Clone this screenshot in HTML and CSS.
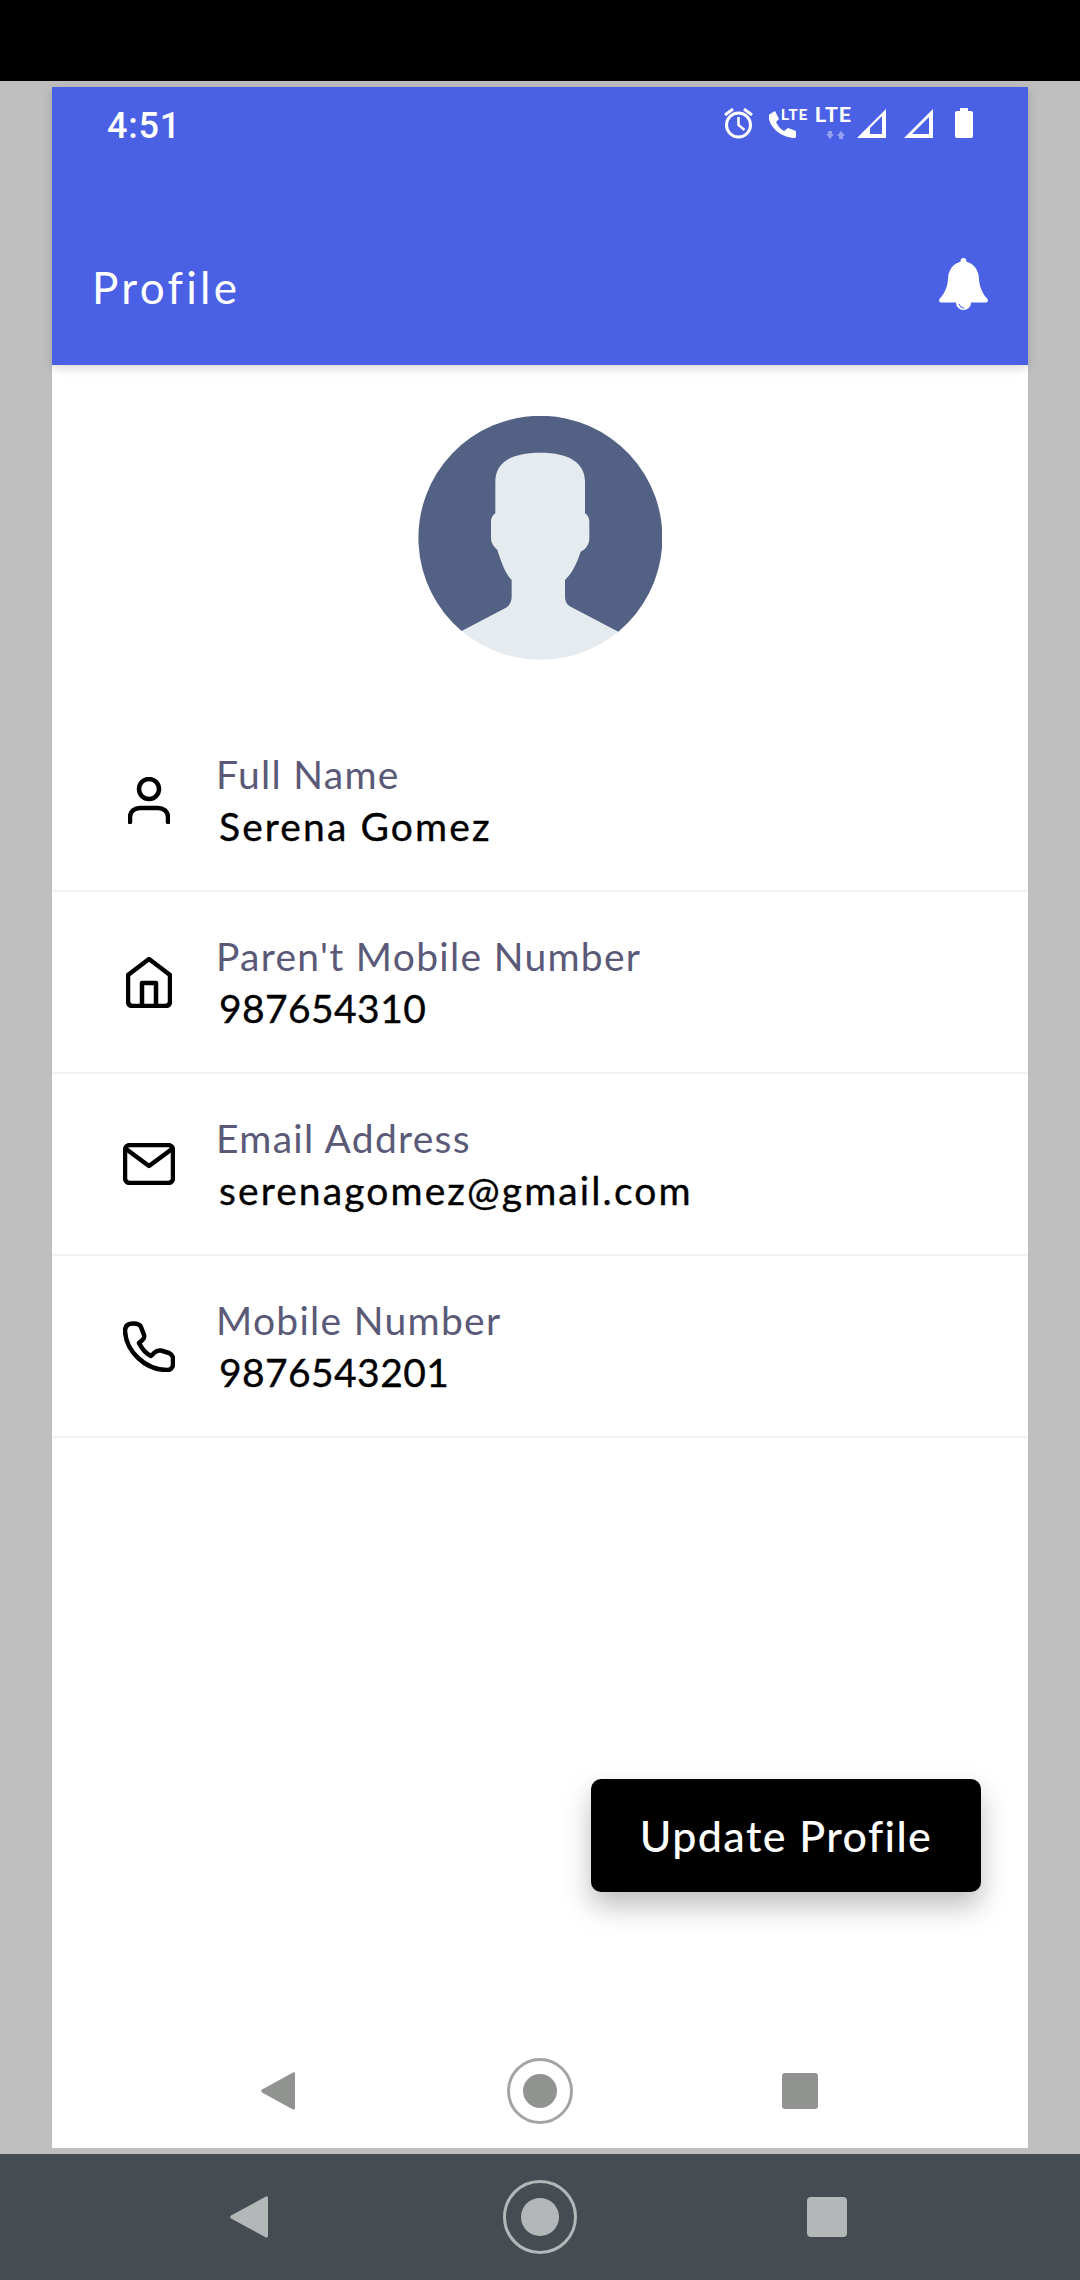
FILE: index.html
```html
<!DOCTYPE html>
<html lang="en">
<head>
<meta charset="utf-8">
<title>Profile</title>
<link rel="stylesheet" href="styles.css">
</head>
<body>
<div class="device">
  <div class="topbar"></div>
  <div class="stage">
    <div class="screen">
      <header class="appbar">
        <div class="status">
          <span class="time">4:51</span>
          <div class="status-icons">
            <svg class="si-alarm" viewBox="724 108 29 31" width="29" height="31">
              <circle cx="738.5" cy="125" r="12" fill="none" stroke="#fff" stroke-width="3"/>
              <path d="M738.5 117v8l6 5" fill="none" stroke="#fff" stroke-width="2.500"/>
              <path d="M725 115l8-6M752 115l-8-6" fill="none" stroke="#fff" stroke-width="3"/>
            </svg>
            <div class="si-call">
              <svg viewBox="769 108 28 31" width="28" height="31" fill="#fff">
                <path d="M775 111l-5 3c-1.500 1-1.500 3-1 5 2 10 14 19 26 19l1-1v-6l-8-3-4 3c-4-2-6-5-8-9l3-3z"/>
              </svg>
              <span class="lte-small">LTE</span>
            </div>
            <div class="si-lte">
              <span class="lte">LTE</span>
              <svg viewBox="820 131 24 8" width="24" height="8" fill="#fff" opacity=".4">
                <path d="M824 134h2v-3h4v3h2l-4 5z"/>
                <path d="M835 136h2v3h4v-3h2l-4-5z"/>
              </svg>
            </div>
            <svg class="si-sig1" viewBox="857 108 29 31" width="29" height="31" fill="#fff">
              <path fill-rule="evenodd" d="M857 138l29-29v29zM870 128v6h12v-18z"/>
            </svg>
            <svg class="si-sig2" viewBox="904 108 29 31" width="29" height="31" fill="#fff">
              <path fill-rule="evenodd" d="M904 138l29-29v29zM912 134h17v-17z"/>
            </svg>
            <svg class="si-batt" viewBox="955 108 18 31" width="18" height="31" fill="#fff">
              <path d="M960 108h8v3h3a2 2 0 0 1 2 2v23a2 2 0 0 1-2 2h-14a2 2 0 0 1-2-2v-23a2 2 0 0 1 2-2h3z"/>
            </svg>
          </div>
        </div>
        <div class="titlebar">
          <h1 class="title">Profile</h1>
          <svg class="bell" viewBox="777 505 146 155" width="49" height="52">
            <path fill="#fff" d="M841 516C841 508 845 505 850 505C855 505 859 508 859 516C882 522 895 542 896 565C897 592 908 612 920 625C926 632 922 638 914 638H786C778 638 774 632 780 625C792 612 803 592 804 565C805 542 818 522 841 516Z"/>
            <path fill="#fff" d="M828 634H872V640A22 20 0 0 1 828 640Z"/>
            <path fill="none" stroke="#4a61e5" stroke-width="3" d="M838 642A13 13 0 0 0 852 654"/>
          </svg>
        </div>
      </header>

      <main class="content">
        <div class="avatar-wrap">
          <svg class="avatar" viewBox="84 48 732 732" width="244" height="244">
            <path fill="#536184" d="M215 693A366 366 0 1 1 685 695Z"/>
            <path fill="#e6ebef" d="M215 693L345 625C358 618 365 605 365 590V540C350 525 338 500 322 450C310 440 303 428 303 415V365C303 355 308 345 316 340V245C316 190 360 158 450 158C540 158 585 190 585 245V340C593 345 598 355 598 365V415C598 435 585 450 572 455C558 500 540 525 525 540V590C525 605 532 616 545 622L685 695A366 366 0 0 1 215 693Z"/>
          </svg>
        </div>

        <ul class="fields">
          <li class="field">
            <span class="field-icon">
              <svg viewBox="0 0 42 47" width="42" height="47" class="line-icon">
                <circle cx="21" cy="12" r="10"/>
                <path d="M2 45V40C2 34 7 31 12 31H30C35 31 40 34 40 40V45"/>
              </svg>
            </span>
            <div class="field-text">
              <span class="label">Full Name</span>
              <span class="value">Serena Gomez</span>
            </div>
          </li>
          <li class="field">
            <span class="field-icon">
              <svg viewBox="0 0 46 51" width="46" height="51" class="line-icon">
                <path d="M23 2L44 18V44Q44 49 39 49H7Q2 49 2 44V18Z"/>
                <path d="M16 49V26H30V49"/>
              </svg>
            </span>
            <div class="field-text">
              <span class="label">Paren't Mobile Number</span>
              <span class="value value-num">987654310</span>
            </div>
          </li>
          <li class="field">
            <span class="field-icon">
              <svg viewBox="0 0 52 42" width="52" height="42" class="line-icon">
                <rect x="2" y="2" width="48" height="38" rx="5"/>
                <path d="M3 6L26 23L49 6"/>
              </svg>
            </span>
            <div class="field-text">
              <span class="label">Email Address</span>
              <span class="value">serenagomez@gmail.com</span>
            </div>
          </li>
          <li class="field">
            <span class="field-icon">
              <svg viewBox="0 0 52 51" width="52" height="51" class="line-icon">
                <path d="M10 2.500C5 2.500 2 5 2 10C3 30 22 49 44 49C47 49 50 47 50 43V37C50 34 48 33 46 32L38 29.500C35 29 33 30 31 32L28 35C22 32 19 28 16 22L19.500 19C21 17.500 21.500 16 21 14L18 6C17 3.500 14 2.500 10 2.500Z"/>
              </svg>
            </span>
            <div class="field-text">
              <span class="label">Mobile Number</span>
              <span class="value value-num">9876543201</span>
            </div>
          </li>
        </ul>

        <div class="actions">
          <button class="update-btn" type="button">Update Profile</button>
        </div>
      </main>

      <nav class="inner-nav">
        <svg viewBox="0 0 34 38" width="34" height="38" class="nav-back"><path d="M32 .5C33 0 34 1 34 2V36C34 37 33 38 32 37.500L1 20.500C0 19.500 0 18.500 1 17.500Z"/></svg>
        <span class="nav-home"><span class="nav-dot"></span></span>
        <span class="nav-square"></span>
      </nav>
    </div>
  </div>
  <nav class="outer-nav">
    <svg viewBox="0 0 38 42" width="38" height="42" class="outer-back"><path d="M36 .5C37 0 38 1 38 2V40C38 41 37 42 36 41.500L1 22.500C0 21.500 0 20.500 1 19.500Z"/></svg>
    <span class="outer-home"><span class="outer-dot"></span></span>
    <span class="outer-square"></span>
  </nav>
</div>
</body>
</html>
```

FILE: styles.css
```css
* { box-sizing: border-box; }

html, body {
  margin: 0;
  padding: 0;
}

body {
  width: 1080px;
  height: 2280px;
  overflow: hidden;
  background: #bfbfbf;
  font-family: "Lato", "Open Sans", sans-serif;
}

.device {
  width: 1080px;
  height: 2280px;
  display: flex;
  flex-direction: column;
}

.topbar {
  height: 81px;
  flex: none;
  background: #000;
}

.stage {
  flex: 1;
  min-height: 0;
  display: flex;
  padding: 6px 52px 6px;
}

.screen {
  flex: 1;
  display: flex;
  flex-direction: column;
  background: #fff;
}

/* App bar */
.appbar {
  height: 278px;
  flex: none;
  background: #4a61e5;
  color: #fff;
  box-shadow: 0 3px 10px rgba(0, 0, 0, .16);
  position: relative;
  z-index: 1;
}

.status {
  height: 57px;
  display: flex;
  justify-content: space-between;
  align-items: flex-end;
  padding: 0 55px 0 55px;
}

.time {
  font-family: "Roboto", sans-serif;
  font-weight: 500;
  font-size: 36px;
  line-height: 42px;
  letter-spacing: .8px;
  margin-bottom: -3px;
}

.status-icons {
  display: flex;
  align-items: flex-start;
  margin-bottom: 5px;
  height: 31px;
}

.status-icons svg { display: block; flex: none; }

.si-call {
  position: relative;
  width: 38px;
  height: 31px;
  margin-left: 16px;
}

.lte-small {
  position: absolute;
  left: 12px;
  top: 0;
  font-family: "Roboto", sans-serif;
  font-weight: 700;
  font-size: 15px;
  line-height: 15px;
  letter-spacing: 1px;
}

.si-lte {
  width: 35px;
  margin-left: 9px;
  display: flex;
  flex-direction: column;
  align-items: center;
}

.lte {
  font-family: "Roboto", sans-serif;
  font-weight: 700;
  font-size: 21px;
  line-height: 21px;
  letter-spacing: 1px;
  margin-top: -3px;
  white-space: nowrap;
}

.si-lte svg { margin-top: 5px; }
.status-icons .si-sig1 { margin-left: 6px; }
.status-icons .si-sig2 { margin-left: 18px; }
.status-icons .si-batt { margin-left: 22px; }

.titlebar {
  display: flex;
  justify-content: space-between;
  align-items: flex-start;
  padding: 0 40px 0 40px;
  margin-top: 114px;
}

.title {
  margin: 0;
  font-family: "Lato", sans-serif;
  font-weight: 400;
  font-size: 44px;
  line-height: 58px;
  letter-spacing: 3.300px;
}

.bell { display: block; }

/* Content */
.content {
  flex: 1;
  min-height: 0;
  display: flex;
  flex-direction: column;
}

.avatar-wrap {
  display: flex;
  justify-content: center;
  padding-top: 51px;
  padding-bottom: 50px;
}

.avatar { display: block; }

.fields {
  list-style: none;
  margin: 0;
  padding: 0;
}

.field {
  height: 182px;
  display: flex;
  align-items: center;
  border-bottom: 2px solid #f1f1f2;
}

.field-icon {
  width: 164px;
  flex: none;
  display: flex;
  justify-content: center;
  padding-left: 30px;
}

.line-icon {
  display: block;
  fill: none;
  stroke: #000;
  stroke-width: 4.500;
  stroke-linecap: round;
  stroke-linejoin: round;
}

.field-text {
  display: flex;
  flex-direction: column;
  gap: 6px;
}

.label {
  color: #5a5a78;
  font-size: 39px;
  line-height: 46px;
  letter-spacing: 1.300px;
}

.value {
  color: #000;
  font-size: 39px;
  line-height: 46px;
  font-weight: 400;
  letter-spacing: 2.100px;
  padding-left: 3px;
  -webkit-text-stroke: .35px #000;
}

.value-num { letter-spacing: .4px; }

.actions {
  margin-top: auto;
  display: flex;
  justify-content: flex-end;
  padding-right: 47px;
  padding-bottom: 142px;
}

.update-btn {
  width: 390px;
  height: 113px;
  border: 0;
  border-radius: 10px;
  background: #000;
  color: #fff;
  font-family: "Lato", sans-serif;
  font-size: 43px;
  font-weight: 500;
  letter-spacing: 1.400px;
  box-shadow: 0 14px 28px rgba(0, 0, 0, .26);
}

/* Inner nav */
.inner-nav {
  height: 114px;
  flex: none;
  display: grid;
  grid-template-columns: 1fr 1fr 1fr;
  place-items: center;
  padding: 0 210px 0 209px;
}

.nav-back { display: block; fill: #919391; justify-self: start; }

.nav-home {
  width: 66px;
  height: 66px;
  margin-left: 1px;
  border: 3px solid #a3a5a3;
  border-radius: 50%;
  display: flex;
  align-items: center;
  justify-content: center;
}

.nav-dot {
  width: 34px;
  height: 34px;
  border-radius: 50%;
  background: #919391;
}

.nav-square {
  width: 36px;
  height: 36px;
  border-radius: 3px;
  background: #919391;
  justify-self: end;
}

/* Outer nav */
.outer-nav {
  height: 126px;
  flex: none;
  background: #454d53;
  display: grid;
  grid-template-columns: 1fr 1fr 1fr;
  place-items: center;
  padding: 0 233px 0 230px;
}

.outer-back { display: block; fill: #b3b7b8; justify-self: start; }

.outer-home {
  width: 74px;
  height: 74px;
  margin-left: 3px;
  border: 3px solid #b3b7b8;
  border-radius: 50%;
  display: flex;
  align-items: center;
  justify-content: center;
}

.outer-dot {
  width: 38px;
  height: 38px;
  border-radius: 50%;
  background: #b3b7b8;
}

.outer-square {
  width: 40px;
  height: 40px;
  border-radius: 4px;
  background: #b3b7b8;
  justify-self: end;
}
```
